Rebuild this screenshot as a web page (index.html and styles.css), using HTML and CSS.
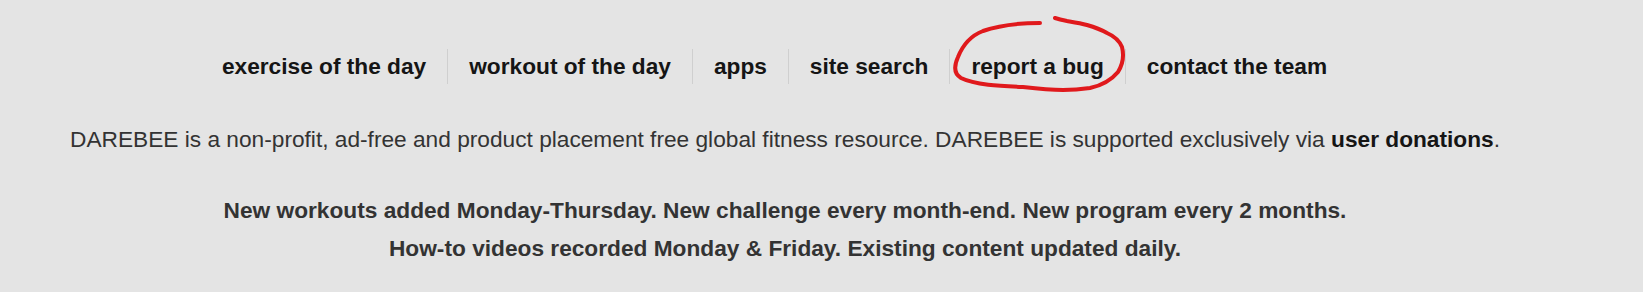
FILE: index.html
```html
<!DOCTYPE html>
<html>
<head>
    <title>DAREBEE</title>
    <link rel="stylesheet" href="styles.css">
</head>
<body>
    <div class="page">
        <ul class="topnav">
            <li><a href="#">exercise of the day</a></li>
            <li><a href="#">workout of the day</a></li>
            <li><a href="#">apps</a></li>
            <li><a href="#">site search</a></li>
            <li><a href="#">report a bug</a></li>
            <li><a href="#">contact the team</a></li>
        </ul>

        <p class="about">
            DAREBEE is a non-profit, ad-free and product placement free global fitness resource. DAREBEE is supported exclusively via <a href="#">user donations</a>.
        </p>

        <p class="schedule">
            New workouts added Monday-Thursday. New challenge every month-end. New program every 2 months.<br>
            How-to videos recorded Monday &amp; Friday. Existing content updated daily.
        </p>

        <!-- hand-drawn marker loop around "report a bug" -->
        <svg class="scribble" width="1643" height="292" viewBox="0 0 1643 292">
            <path d="M1040 23 C1022 23, 1000 25, 983 31 C970 36, 962 47, 958 57 C954 66, 954 74, 961 78 C975 85, 1000 86, 1023 87 C1040 89, 1052 90, 1063 90 C1075 90, 1083 89, 1090 88 C1104 85, 1113 78, 1118 72 C1123 64, 1124 55, 1122 47 C1119 40, 1114 36, 1107 33 C1100 29, 1094 27, 1087 25 C1080 23, 1073 22, 1067 21 C1062 20, 1058 19, 1055 18"
                  fill="none" stroke="#e0191c" stroke-width="4" stroke-linecap="round" stroke-linejoin="round"/>
        </svg>
    </div>
</body>
</html>
```

FILE: styles.css
```css
body {
    margin: 0;
    background-color: #e4e4e4; /* light grey page */
    font-family: "Liberation Sans", Arial, sans-serif;
}

.page {
    position: relative;
    width: 1570px;
    height: 292px;
    padding-top: 49px;
    box-sizing: border-box;
    text-align: center;
}

.topnav {
    list-style: none;
    margin: 0;
    padding: 0 21px 0 0;
    display: flex;
    justify-content: center;
}

.topnav li {
    border-left: 1px solid #cfcfcf;
    line-height: 35px;
}

.topnav li:first-child {
    border-left: none;
}

.topnav a {
    display: block;
    padding: 0 21px;
    font-size: 22.7px;
    font-weight: bold;
    color: #151515;
    text-decoration: none;
}

.about {
    margin: 40px 0 0 0;
    font-size: 22.7px;
    line-height: 30px;
    color: #333;
}

.about a {
    font-weight: bold;
    color: #151515;
    text-decoration: none;
}

.schedule {
    margin: 37px 0 0 0;
    font-size: 22.7px;
    font-weight: bold;
    line-height: 38px;
    color: #333;
}

.scribble {
    position: absolute;
    top: 0;
    left: 0;
    pointer-events: none;
}
```
